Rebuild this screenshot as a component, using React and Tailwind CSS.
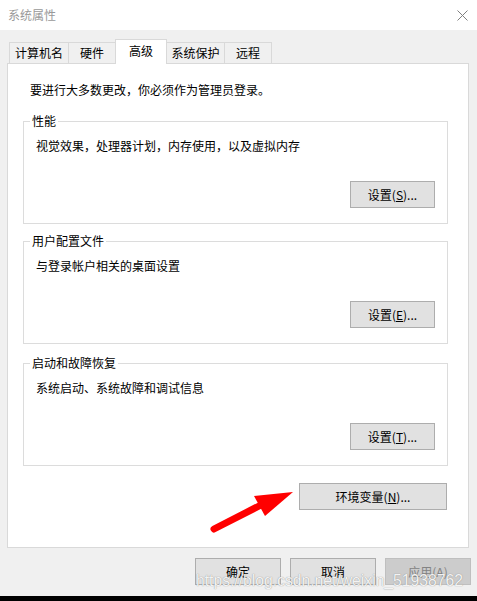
const groups = [
  { title: "性能", desc: "视觉效果，处理器计划，内存使用，以及虚拟内存", key: "S", gap: "mt-[15px]" },
  { title: "用户配置文件", desc: "与登录帐户相关的桌面设置", key: "E", gap: "mt-[9px]" },
  { title: "启动和故障恢复", desc: "系统启动、系统故障和调试信息", key: "T", gap: "mt-[11px]" },
];

function Button({ children, className = "" }) {
  return (
    <button
      className={`h-[27px] border border-[#adadad] bg-[#e1e1e1] text-[12px] leading-[16px] text-black flex items-center justify-center ${className}`}
    >
      {children}
    </button>
  );
}

function GroupBox({ title, desc, accessKey, gap }) {
  return (
    <fieldset className={`${gap} ml-[15px] w-[425px] border border-[#dcdcdc]`}>
      <legend className="ml-[6px] px-[2px] text-[12px] leading-[16px]">{title}</legend>
      <p className="mt-[9px] ml-[12px] text-[12px] leading-[16px]">{desc}</p>
      <div className="mt-[27px] pb-[15px] pr-[12px] flex justify-end">
        <Button className="w-[85px]">
          设置(<u>{accessKey}</u>)...
        </Button>
      </div>
    </fieldset>
  );
}

export default function App() {
  const tabs = [
    { label: "计算机名", cls: "w-[59px] border-l" },
    { label: "硬件", cls: "w-[47px] border-l" },
    { label: "高级", active: true },
    { label: "系统保护", cls: "w-[58px] border-r" },
    { label: "远程", cls: "w-[47px] border-r" },
  ];

  return (
    <div
      className="relative w-[477px] h-[601px] flex flex-col overflow-hidden text-black"
      style={{ fontFamily: '"Noto Sans CJK SC", "Noto Sans", sans-serif' }}
    >
      {/* title bar */}
      <div className="h-[30px] bg-white flex items-center justify-between pl-[8px] pr-[9px]">
        <span className="text-[12px] leading-[16px] text-[#999999]">系统属性</span>
        <svg width="11" height="11" viewBox="0 0 11 11" className="text-[#808080]">
          <path d="M0.5 0.5L10.5 10.5M10.5 0.5L0.5 10.5" stroke="currentColor" strokeWidth="1" />
        </svg>
      </div>

      <div className="flex-1 bg-[#f0f0f0] pt-[9px] flex flex-col">
        {/* tabs */}
        <div className="ml-[9px] h-[24px] flex items-end">
          {tabs.map((t) =>
            t.active ? (
              <div
                key={t.label}
                className="relative z-10 -mb-px h-[25px] w-[52px] bg-white border-l border-r border-t border-[#d9d9d9] flex justify-center pt-[3px] text-[12px] leading-[16px]"
              >
                {t.label}
              </div>
            ) : (
              <div
                key={t.label}
                className={`h-[21px] ${t.cls} border-t border-[#d9d9d9] flex items-center justify-center text-[12px] leading-[16px]`}
              >
                {t.label}
              </div>
            )
          )}
        </div>

        {/* panel */}
        <div className="ml-[7px] w-[462px] bg-white border border-[#d9d9d9] flex flex-col pb-[37px]">
          <p className="mt-[18px] ml-[22px] text-[12px] leading-[16px]">
            要进行大多数更改，你必须作为管理员登录。
          </p>
          {groups.map((g) => (
            <GroupBox key={g.title} title={g.title} desc={g.desc} accessKey={g.key} gap={g.gap} />
          ))}
          <Button className="mt-[17px] self-end mr-[21px] w-[148px]">
            环境变量(<u>N</u>)...
          </Button>
        </div>

        {/* dialog buttons */}
        <div className="mt-[10px] ml-[195px] flex gap-[9px]">
          <Button className="w-[86px]">确定</Button>
          <Button className="w-[86px]">取消</Button>
          <button className="h-[27px] w-[86px] border border-[#bfbfbf] bg-[#cccccc] text-[12px] leading-[16px] text-[#838383]">
            应用(A)
          </button>
        </div>
      </div>

      <div className="h-[5px] bg-black" />

      {/* annotation arrow */}
      <svg
        className="absolute left-[205px] top-[485px] pointer-events-none"
        width="95"
        height="50"
        viewBox="0 0 95 50"
      >
        <line x1="9" y1="44" x2="56" y2="20" stroke="#ff0000" strokeWidth="7" strokeLinecap="round" />
        <polygon points="88,7 49,11 60,31" fill="#ff0000" />
      </svg>

      {/* watermark */}
      <span
        className="absolute left-[196px] top-[571px] text-[15.7px] leading-[20px] text-white/90 pointer-events-none [text-shadow:0_0_1px_rgba(90,90,90,0.8)]"
        style={{ fontFamily: '"Liberation Sans", Arial, sans-serif' }}
      >
        https://blog.csdn.net/weixin_51938762
      </span>
    </div>
  );
}
